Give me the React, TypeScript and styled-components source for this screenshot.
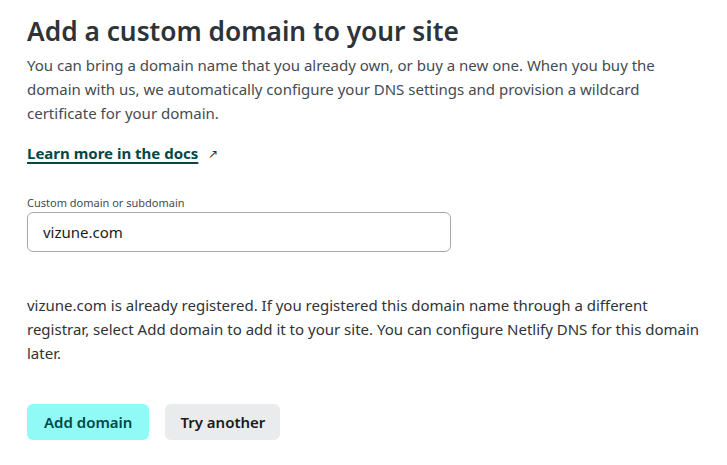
import styled, { createGlobalStyle } from 'styled-components';

const GlobalStyle = createGlobalStyle`
  body {
    margin: 0;
    background: #fff;
    font-family: "Noto Sans", "Open Sans", sans-serif;
    color: #2e3338;
  }
`;

const Page = styled.main`
  padding: 13px 12px 0 27px;
  width: 727px;
  box-sizing: border-box;
`;

const Title = styled.h1`
  margin: 0;
  font-size: 26.3px;
  line-height: 36px;
  font-weight: 600;
  color: #2e3338;
`;

const Text = styled.p`
  margin: 4px 0 0;
  max-width: 670px;
  font-size: 15px;
  line-height: 24px;
  color: #444b52;
`;

const DocsLink = styled.a`
  display: inline-flex;
  align-items: center;
  gap: 10px;
  margin-top: 18px;
  font-size: 15px;
  font-weight: 700;
  color: #014847;
  text-decoration: none;
`;

const LinkText = styled.span`
  text-decoration: underline;
  text-underline-offset: 3px;
  text-decoration-thickness: 2px;
`;

const Arrow = styled.span`
  font-size: 12px;
  font-weight: 400;
  color: #014847;
`;

const Field = styled.div`
  margin-top: 32px;
  display: flex;
  flex-direction: column;
  gap: 2px;
  width: 424px;
`;

const Label = styled.label`
  font-size: 11px;
  line-height: 14px;
  color: #444b52;
`;

const Input = styled.input`
  height: 40px;
  box-sizing: border-box;
  border: 1px solid #a3a9ac;
  border-radius: 6px;
  padding: 0 15px;
  font-family: inherit;
  font-size: 15px;
  color: #181a1c;
  outline: none;
`;

const Notice = styled.p`
  margin: 41px 0 0;
  max-width: 680px;
  font-size: 15px;
  line-height: 24px;
  color: #2e3338;
`;

const Actions = styled.div`
  display: flex;
  gap: 16px;
  margin-top: 39px;
`;

const Button = styled.button<{ $primary?: boolean }>`
  height: 36px;
  padding: 0 ${(p) => (p.$primary ? '17px' : '15px')};
  border: none;
  border-radius: 6px;
  font-family: inherit;
  font-size: 15px;
  font-weight: 600;
  cursor: pointer;
  background: ${(p) => (p.$primary ? '#8ffaf6' : '#e9ebed')};
  color: ${(p) => (p.$primary ? '#014847' : '#181a1c')};
`;

export default function App() {
  return (
    <Page>
      <GlobalStyle />
      <Title>Add a custom domain to your site</Title>
      <Text>
        You can bring a domain name that you already own, or buy a new one. When you buy the
        domain with us, we automatically configure your DNS settings and provision a wildcard
        certificate for your domain.
      </Text>
      <DocsLink href="#">
        <LinkText>Learn more in the docs</LinkText>
        <Arrow>↗</Arrow>
      </DocsLink>
      <Field>
        <Label htmlFor="domain">Custom domain or subdomain</Label>
        <Input id="domain" defaultValue="vizune.com" />
      </Field>
      <Notice>
        vizune.com is already registered. If you registered this domain name through a different
        registrar, select Add domain to add it to your site. You can configure Netlify DNS for this
        domain later.
      </Notice>
      <Actions>
        <Button $primary>Add domain</Button>
        <Button>Try another</Button>
      </Actions>
    </Page>
  );
}
